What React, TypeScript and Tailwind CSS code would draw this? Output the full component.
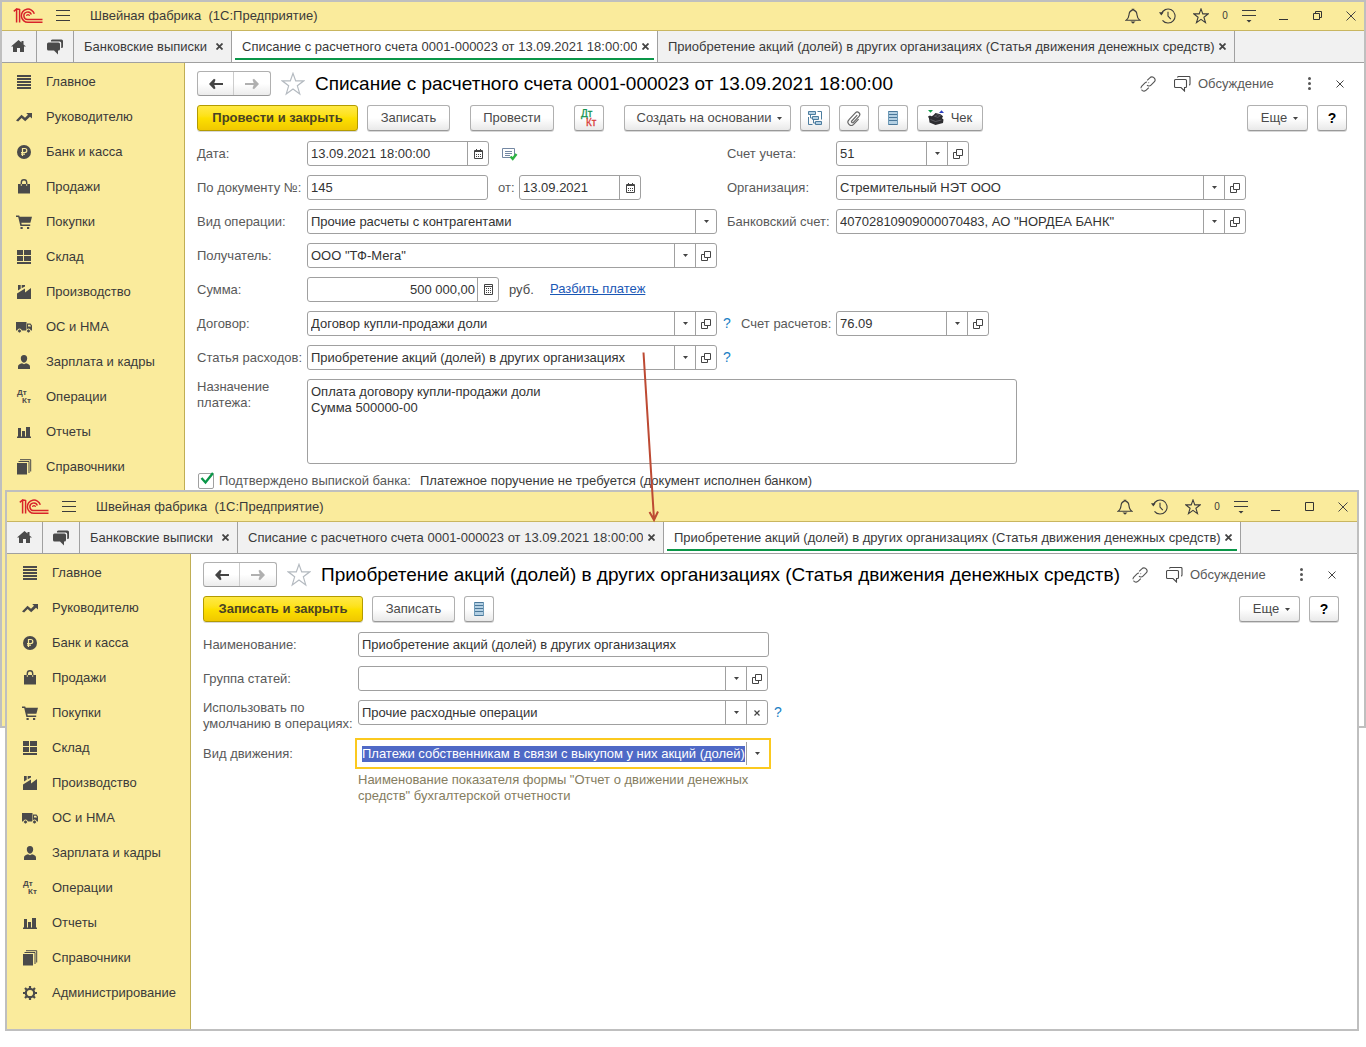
import React from 'react';

type AddonKind = 'drop' | 'open' | 'calendar' | 'calc' | 'clear';

function Logo() {
  return (
    <svg width="30" height="16" viewBox="0 0 30 16" fill="none" stroke="#d8232a" strokeWidth="1.5">
      <path d="M.8 3.4 3.6 1v13.6M6.6 1v13.6M3.6 1.2h3" />
      <path d="M21.3 5.8A6.6 6.6 0 1 0 15 14.3h14.5" />
      <path d="M18.3 6.6A3.8 3.8 0 1 0 15 11.6h14.5" />
      <path d="M13.6 8.1a1.4 1.4 0 0 1 2.8 0" strokeWidth="1.2" />
    </svg>
  );
}

function BellIcon() {
  return (
    <svg width="16" height="16" viewBox="0 0 16 16" fill="none" stroke="#3c3c3c" strokeWidth="1.1">
      <path d="M1.2 12.2h13.6c-2.3-1.6-2.6-3-2.8-5.3-.2-2.7-1.4-4.1-3.2-4.5V1.2H7.2v1.2C5.4 2.8 4.2 4.200 4 6.900c-.2 2.300-.5 3.700-2.800 5.300Z" />
      <path d="M5.500 13.500h5L8 15.800Z" fill="#3c3c3c" stroke="none" />
    </svg>
  );
}

function HistoryIcon() {
  return (
    <svg width="17" height="16" viewBox="0 0 17 16" fill="none" stroke="#3c3c3c" strokeWidth="1.1">
      <path d="M2.300 6.200A7 7 0 1 1 3.500 12.300" />
      <path d="M9 3.800V8l2.800 3.200" />
      <path d="M0 4.200h4.600L2.300 7.400Z" fill="#3c3c3c" stroke="none" />
    </svg>
  );
}

function StarIcon({ size, color }: { size: number; color: string }) {
  return (
    <svg width={size} height={size} viewBox="0 0 16 16" fill="none" stroke={color} strokeWidth={size > 16 ? 0.8 : 1.1}>
      <path d="m8 .9 1.800 5h5.400l-4.300 3.300 1.600 5.400L8 11.400l-4.500 3.200 1.600-5.400L.8 5.900h5.400Z" />
    </svg>
  );
}

function ServiceIcon() {
  return (
    <svg width="14" height="14" viewBox="0 0 14 14" fill="#3c3c3c">
      <path d="M0 1h14v1H0zM0 6h14v1H0zM4.500 11h5L7 13.500Z" />
    </svg>
  );
}

function HomeIcon() {
  return (
    <svg width="15" height="14" viewBox="0 0 15 14" fill="#4a4a4a" className="-mt-0.5">
      <path d="M7.500 1 0 7.600h2V13h4V9h3v4h4V7.600h2l-2.500-2.200V2h-2v1.600Z" />
    </svg>
  );
}

function ChatFilledIcon() {
  return (
    <svg width="17" height="16" viewBox="0 0 17 16" fill="#4a4a4a">
      <path d="M1.500 3.500h10A1.500 1.500 0 0 1 13 5v5a1.500 1.500 0 0 1-1.500 1.500H11v4l-4-4H1.500A1.500 1.500 0 0 1 0 10V5a1.500 1.500 0 0 1 1.500-1.500Z" />
      <path d="M4 2.500A1.500 1.500 0 0 1 5.500.5h9A1.500 1.500 0 0 1 16 2v5.500A1.500 1.500 0 0 1 14.200 9V4a1.500 1.500 0 0 0-1.500-1.500Z" />
    </svg>
  );
}

function ChatIcon() {
  return (
    <svg width="17" height="16" viewBox="0 0 17 16" fill="none" stroke="#4a4a4a" strokeWidth="1.100">
      <path d="M1.500 3.500h10a1 1 0 0 1 1 1v6a1 1 0 0 1-1 1h-1V15L7 11.500H1.500a1 1 0 0 1-1-1v-6a1 1 0 0 1 1-1Z" />
      <path d="M3.500 1.500a1 1 0 0 1 1-1H15a1 1 0 0 1 1 1V8a1 1 0 0 1-1 1" />
    </svg>
  );
}

function LinkIcon() {
  return (
    <svg width="16" height="16" viewBox="0 0 16 16" fill="none" stroke="#555" strokeWidth="1.100">
      <path d="m7.200 4.400 2.600-2.600a2.800 2.800 0 0 1 4.400.2 2.800 2.800 0 0 1 0 3.900L11 9.100a2.800 2.800 0 0 1-4 0" />
      <path d="m8.800 11.600-2.600 2.600a2.800 2.800 0 0 1-4.400-.2 2.800 2.800 0 0 1 0-3.900L5 6.900a2.800 2.800 0 0 1 4 0" strokeDasharray="9 1.500" />
    </svg>
  );
}

function CloseIcon({ size, width = 1 }: { size: number; width?: number }) {
  return (
    <svg width={size} height={size} viewBox={`0 0 ${size} ${size}`} stroke="#444" strokeWidth={width}>
      <path d={`M.5.5 ${size - 0.5} ${size - 0.5}M${size - 0.5} .5.5 ${size - 0.5}`} />
    </svg>
  );
}

function ArrowIcon({ color, flip = false }: { color: string; flip?: boolean }) {
  return (
    <svg width="14" height="12" viewBox="0 0 14 12" fill={color} className={flip ? 'rotate-180' : ''}>
      <path d="M0 6 5 .8l1.500.9L5.300 5H14v2H5.300l1.200 3.300-1.500.9Z" />
    </svg>
  );
}

function Caret() {
  return (
    <svg width="5" height="3" viewBox="0 0 5 3" fill="#444" aria-hidden="true">
      <path d="M0 0h5L2.500 3Z" />
    </svg>
  );
}

function ListIcon() {
  return (
    <svg width="12" height="14" viewBox="0 0 12 14">
      <path d="M1 0h10v14H1z" fill="#b4d0e3" />
      <path d="M1 0h10v1H1zM1 3h10v1H1zM1 6h10v1H1zM1 9h10v1H1zM1 13h10v1H1z" fill="#4a7799" />
      <path d="M1 0h1v14H1zM10 0h1v14h-1z" fill="#6f9bb8" />
    </svg>
  );
}

function StructureIcon() {
  return (
    <svg width="16" height="16" viewBox="0 0 16 16" fill="none" stroke="#4d7d9f">
      <path d="M1.500 1.500h7v3h-7zM5.500 6.500h6v3h-6zM8.500 11.500h6v3h-6z" fill="#b4d0e3" />
      <path d="M10.500 1.500h4v8M3.500 4.500V8h2M6.500 9.500V13h2M1.500 7v7.500h4" />
    </svg>
  );
}

function ClipIcon() {
  return (
    <svg width="14" height="15" viewBox="0 0 14 15" fill="none" stroke="#666" strokeWidth="1.200">
      <path d="M10.200 4.200 4.800 10a1 1 0 0 0 1.600 1.400L12 5.300a2.400 2.400 0 0 0-3.600-3.500L2 8.700a3.200 3.200 0 0 0 4.600 4.700l5-5.300" />
    </svg>
  );
}

function CashIcon() {
  return (
    <svg width="17" height="16" viewBox="0 0 17 16">
      <path d="M0 0h5L2.500 2.800Z" fill="#12a14b" />
      <path d="M11 3h5L13.500.2Z" fill="#2c3ec0" />
      <path d="M5 5.500 7.500 3l5 1.200 2.500 2-1 2 1.500 1.300-.5 3.500-7.500 2-6-2.500L1 8.500l-1-2 2-1 1.500.8Z" fill="#2c2c30" />
      <path d="m6.500 6.300 3-1.600 3 .9-2.600 1.700ZM2.500 9.500l5 2 6-1.500" fill="none" stroke="#77777f" strokeWidth=".6" />
    </svg>
  );
}

function PostingsIcon() {
  return (
    <svg width="18" height="18" viewBox="0 0 18 18" fontFamily="Liberation Sans, sans-serif" fontSize="10">
      <text x="1" y="8" fill="#149450" stroke="#149450" strokeWidth=".3">Дт</text>
      <text x="6" y="17" fill="#d9403c" stroke="#d9403c" strokeWidth=".3">Кт</text>
    </svg>
  );
}

function PostedIcon() {
  return (
    <svg width="16" height="14" viewBox="0 0 16 14" fill="none">
      <path d="M.5 1.500h12v9H.5zM3 4.500h7M3 6.500h7M3 8.500h5" stroke="#7488a3" />
      <path d="m8.500 9.500 2.200 2.300L14.500 7" stroke="#2fb344" strokeWidth="2.400" />
    </svg>
  );
}

function AddonIcon({ kind }: { kind: AddonKind }) {
  if (kind === 'drop') return <Caret />;
  if (kind === 'clear') return <CloseIcon size={6} width={1.2} />;
  if (kind === 'open') {
    return (
      <svg width="10" height="10" viewBox="0 0 10 10" fill="none" stroke="#444">
        <path d="M3.500.5h6v6h-6zM3.500 3.500h-3v6h6v-3" />
      </svg>
    );
  }
  if (kind === 'calc') {
    return (
      <svg width="9" height="11" viewBox="0 0 9 11" fill="none" stroke="#444">
        <path d="M.5.5h8v10h-8zM.5 2.500h8" />
        <path d="M2 4.500h5.500M2 6.500h5.500M2 8.500h5.500" strokeDasharray="1 1" />
      </svg>
    );
  }
  return (
    <svg width="9" height="10" viewBox="0 0 9 10" fill="none" stroke="#444">
      <path d="M.5 1.500h8v8h-8zM.5 2.500h8M2.500 0v2M6.500 0v2" />
      <path d="M2 5.500h5.500M2 7.500h5.500" strokeDasharray="1 1" />
    </svg>
  );
}

const MENU_ICONS: Record<string, React.ReactNode> = {
  main: <path d="M1 1h14v2H1zM1 4h14v2H1zM1 7h14v2H1zM1 10h14v2H1zM1 13h14v2H1z" />,
  trend: <path d="M0 11.500 5.500 5.800l3.500 3 3-3L10.200 4H16v5.500l-2-1.800-4.800 4.600-3.600-3.200-3.500 3.400Z" />,
  bank: (
    <>
      <circle cx="8" cy="8" r="7" />
      <path d="M6.500 12V4.500h2.300a2 2 0 0 1 0 4H5M5 10.200h4" fill="none" stroke="#faeb9c" strokeWidth="1.200" />
    </>
  ),
  bag: (
    <>
      <path d="M2 5h12v9.500H2z" />
      <path d="M5.300 7V3.500a2.700 2.700 0 0 1 5.400 0V7" fill="none" stroke="#4a4a4a" strokeWidth="1.400" />
      <path d="M5.300 5v2M10.700 5v2" stroke="#faeb9c" strokeWidth=".8" />
    </>
  ),
  cart: <path d="M0 1.500h3.200l.5 1.300H16l-1.600 6H5.300l.4 1.700h8.500v1.500H4.400L2.200 3H0zM4.500 13h2.200v2H4.500zM11 13h2.200v2H11z" />,
  stock: <path d="M1 1h6v5H1zM8 1h7v5H8zM1 7h6v5H1zM8 7h7v5H8zM1 13h14v2H1z" />,
  factory: <path d="M1 15V9.500l8-5v4L15 4v11zM2 1h2.700v3.800L2 6.500zM5.700 1H9v1.500L5.700 4.300z" />,
  truck: (
    <>
      <path d="M0 3h10.500v8.500H0zM11 4.500h3.500L16 6.500v5h-5z" />
      <path d="M12 5.700h2.200l.8 1.800h-3z" fill="#faeb9c" />
      <g stroke="#faeb9c" strokeWidth="1">
        <circle cx="3.500" cy="12" r="2" />
        <circle cx="12.500" cy="12" r="2" />
      </g>
    </>
  ),
  person: <path d="M8 1c2.200 0 3.200 1.400 3.200 3.200 0 2.300-1.400 4.500-3.200 4.500S4.800 6.500 4.800 4.200C4.800 2.400 5.800 1 8 1ZM2 15v-2.300c0-2 1.800-2.800 4-3.400l2 .9 2-.9c2.200.6 4 1.400 4 3.400V15Z" />,
  operations: (
    <g fontFamily="Liberation Sans, sans-serif" fontSize="8" fontWeight="bold">
      <text x="1" y="6">Дт</text>
      <text x="6" y="14">Кт</text>
    </g>
  ),
  reports: <path d="M1 12.500h14V14H1zM2 4h3v9H2zM6 7h3v6H6zM10 3h4v10h-4z" />,
  books: (
    <>
      <path d="M1 4h10v11.500H1z" />
      <path d="M2.500 2.500H13V14M4 .7h10.700V12.500" fill="none" stroke="#4a4a4a" strokeWidth="1" />
    </>
  ),
  gear: (
    <>
      <circle cx="8" cy="8" r="4.200" fill="none" stroke="#4a4a4a" strokeWidth="2.200" />
      <path d="M8 1v3M8 12v3M1 8h3M12 8h3M3 3l2.200 2.200M10.800 10.800 13 13M3 13l2.200-2.200M10.800 5.200 13 3" stroke="#4a4a4a" strokeWidth="2.200" />
    </>
  ),
};

const MENU = [
  { icon: 'main', title: 'Главное' },
  { icon: 'trend', title: 'Руководителю' },
  { icon: 'bank', title: 'Банк и касса' },
  { icon: 'bag', title: 'Продажи' },
  { icon: 'cart', title: 'Покупки' },
  { icon: 'stock', title: 'Склад' },
  { icon: 'factory', title: 'Производство' },
  { icon: 'truck', title: 'ОС и НМА' },
  { icon: 'person', title: 'Зарплата и кадры' },
  { icon: 'operations', title: 'Операции' },
  { icon: 'reports', title: 'Отчеты' },
  { icon: 'books', title: 'Справочники' },
];

const ADMIN_MENU = [...MENU, { icon: 'gear', title: 'Администрирование' }];

const TABS = [
  { title: 'Банковские выписки', width: 'w-[158px]' },
  { title: 'Списание с расчетного счета 0001-000023 от 13.09.2021 18:00:00', width: 'w-[426px]' },
  { title: 'Приобретение акций (долей) в других организациях (Статья движения денежных средств)', width: 'w-[577px]' },
];

function TitleBar({ maximized }: { maximized: boolean }) {
  const cell = 'flex h-full w-7 items-center justify-center';
  return (
    <header className="flex h-[30px] items-center border-b border-[#c9b660] bg-[#faeb9c]">
      <div className="ml-3">
        <Logo />
      </div>
      <button type="button" aria-label="Меню" className="ml-3 flex flex-col gap-1 px-px">
        <span className="h-px w-[14px] bg-[#3c3c3c]" />
        <span className="h-px w-[14px] bg-[#3c3c3c]" />
        <span className="h-px w-[14px] bg-[#3c3c3c]" />
      </button>
      <span className="ml-[19px] flex-1 truncate whitespace-pre">{'Швейная фабрика  (1С:Предприятие)'}</span>
      <div className="flex h-full items-center gap-1.5">
        <button type="button" aria-label="Уведомления" className={cell}><BellIcon /></button>
        <button type="button" aria-label="История" className={cell}><HistoryIcon /></button>
        <button type="button" aria-label="Избранное" className={cell}><StarIcon size={16} color="#3c3c3c" /></button>
        <span className="w-2 text-center text-[10px]">0</span>
        <button type="button" aria-label="Сервис" className={cell}><ServiceIcon /></button>
        <button type="button" aria-label="Свернуть" className={cell}>
          <span className="mt-2 h-px w-[9px] bg-[#333]" />
        </button>
        <button type="button" aria-label="Развернуть" className={cell}>
          <svg width="9" height="9" viewBox="0 0 9 9" fill="none" stroke="#333">
            {maximized ? <path d="M.5 2.500h6v6h-6zM2.500 2.500v-2h6v6h-2" /> : <path d="M.5.5h8v8h-8z" />}
          </svg>
        </button>
        <button type="button" aria-label="Закрыть" className={cell}><CloseIcon size={10} /></button>
      </div>
    </header>
  );
}

function TabBar({ active }: { active: number }) {
  return (
    <nav className="flex h-8 border-b border-[#a0a0a0] bg-[#f1f1f1]">
      <button type="button" aria-label="Начальная страница" className="flex w-9 shrink-0 items-center justify-center border-r border-[#a0a0a0]">
        <HomeIcon />
      </button>
      <button type="button" aria-label="Обсуждения" className="flex w-[37px] shrink-0 items-center justify-center border-r border-[#a0a0a0]">
        <ChatFilledIcon />
      </button>
      {TABS.map((tab, i) => (
        <div
          key={tab.title}
          className={`relative flex items-center justify-between border-r border-[#a0a0a0] pr-2 pl-2.5 ${tab.width} ${i === active ? 'bg-white' : ''}`}
        >
          <a href="#" className="truncate">{tab.title}</a>
          <button type="button" aria-label="Закрыть вкладку" className="shrink-0"><CloseIcon size={7} width={1.8} /></button>
          {i === active && <span className="absolute inset-x-[3px] bottom-0.5 h-0.5 bg-[#0a9648]" />}
        </div>
      ))}
    </nav>
  );
}

function Sidebar({ items }: { items: typeof MENU }) {
  return (
    <aside className="w-[184px] shrink-0 border-r border-[#c0ae55] bg-[#faeb9c] pt-px pb-[19px]">
      <ul>
        {items.map((item) => (
          <li key={item.title}>
            <a href="#" className="flex h-[35px] items-center gap-3.5 pl-[15px]">
              <svg width="16" height="16" viewBox="0 0 16 16" fill="#4a4a4a" className="shrink-0" aria-hidden="true">
                {MENU_ICONS[item.icon]}
              </svg>
              {item.title}
            </a>
          </li>
        ))}
      </ul>
    </aside>
  );
}

function FormHeader({ title }: { title: string }) {
  return (
    <div className="flex h-[25px] items-center">
      <div className="flex h-full shrink-0 rounded-[3px] border border-[#b0b0b0] border-b-[#999] bg-linear-to-b from-white from-50% to-[#ececec]">
        <button type="button" aria-label="Назад" className="flex w-9 items-center justify-center border-r border-[#ccc]">
          <ArrowIcon color="#444" />
        </button>
        <button type="button" aria-label="Вперед" className="flex w-9 items-center justify-center">
          <ArrowIcon color="#b0b0b0" flip />
        </button>
      </div>
      <button type="button" aria-label="В избранное" className="ml-2.5 shrink-0"><StarIcon size={24} color="#b4bac0" /></button>
      <h1 className="ml-2.5 flex-1 truncate text-[19px] leading-6 text-black">{title}</h1>
      <div className="-mr-px flex shrink-0 items-center">
        <button type="button" aria-label="Ссылка"><LinkIcon /></button>
        <button type="button" className="ml-[18px] flex w-[101px] items-center gap-[7px] text-[#595959]">
          <ChatIcon />
          Обсуждение
        </button>
        <button type="button" aria-label="Еще действия" className="ml-[33px] flex flex-col gap-0.5">
          <span className="size-[3px] rounded-full bg-[#555]" />
          <span className="size-[3px] rounded-full bg-[#555]" />
          <span className="size-[3px] rounded-full bg-[#555]" />
        </button>
        <button type="button" aria-label="Закрыть" className="ml-[25px] w-3"><CloseIcon size={8} /></button>
      </div>
    </div>
  );
}

interface ToolButtonProps {
  width: string;
  primary?: boolean;
  label?: string;
  children: React.ReactNode;
}

function ToolButton({ width, primary = false, label, children }: ToolButtonProps) {
  const look = primary
    ? 'border-[#b39b00] bg-linear-to-b from-[#ffe942] via-[#fde000] to-[#f0c800] font-bold text-[#4a4225]'
    : 'border-[#b0b0b0] border-b-[#999] bg-linear-to-b from-white from-50% to-[#e9e9e9] text-[#4a4a4a]';
  return (
    <button
      type="button"
      aria-label={label}
      className={`flex h-[26px] shrink-0 items-center justify-center gap-1.5 rounded-[3px] border whitespace-nowrap shadow-[0_1px_0_#d8d8d8] ${width} ${look}`}
    >
      {children}
    </button>
  );
}

function MoreButtons() {
  return (
    <div className="ml-auto flex gap-[9px]">
      <ToolButton width="w-[61px]"><span className="pl-1">Еще</span><Caret /></ToolButton>
      <ToolButton width="w-[30px]"><b className="text-sm text-black">?</b></ToolButton>
    </div>
  );
}

const ADDON_TITLES: Record<AddonKind, string> = {
  drop: 'Выбрать из списка',
  open: 'Открыть',
  calendar: 'Выбрать дату',
  calc: 'Калькулятор',
  clear: 'Очистить',
};

interface FieldProps {
  id: string;
  value: string;
  width: string;
  addons?: AddonKind[];
  right?: boolean;
}

function Field({ id, value, width, addons = [], right = false }: FieldProps) {
  return (
    <div className={`flex h-[25px] min-w-0 rounded-[3px] border border-[#a0a0a0] bg-white ${width}`}>
      <input
        id={id}
        type="text"
        defaultValue={value}
        className={`min-w-0 flex-1 bg-transparent text-[#333] outline-none ${right ? 'pr-0.5 text-right' : 'px-[3px]'}`}
      />
      {addons.map((kind) => (
        <button
          key={kind}
          type="button"
          aria-label={ADDON_TITLES[kind]}
          className="flex w-[21px] shrink-0 items-center justify-center border-l border-[#a0a0a0]"
        >
          <AddonIcon kind={kind} />
        </button>
      ))}
    </div>
  );
}

function Label({ id, width, children }: { id: string; width: string; children: React.ReactNode }) {
  return (
    <label htmlFor={id} className={`shrink-0 leading-[25px] whitespace-nowrap text-[#595959] ${width}`}>
      {children}
    </label>
  );
}

function Hint() {
  return <a href="#" className="ml-1.5 text-sm leading-[25px] text-[#1b7fc4]">?</a>;
}

function WriteOffForm() {
  return (
    <main className="min-w-0 flex-1 pt-2 pr-[18px] pl-3">
      <FormHeader title="Списание с расчетного счета 0001-000023 от 13.09.2021 18:00:00" />
      <div className="mt-[9px] flex gap-[9px]">
        <ToolButton width="w-[161px]" primary>Провести и закрыть</ToolButton>
        <ToolButton width="w-[83px]">Записать</ToolButton>
        <div className="mx-[11px] flex gap-5">
          <ToolButton width="w-[84px]">Провести</ToolButton>
          <ToolButton width="w-[30px]" label="Проводки"><PostingsIcon /></ToolButton>
        </div>
        <ToolButton width="w-[167px]"><span className="pl-1">Создать на основании</span><Caret /></ToolButton>
        <ToolButton width="w-[30px]" label="Структура подчиненности"><StructureIcon /></ToolButton>
        <ToolButton width="w-[30px]" label="Файлы"><ClipIcon /></ToolButton>
        <ToolButton width="w-[30px]" label="Список"><ListIcon /></ToolButton>
        <ToolButton width="w-[66px]"><CashIcon />Чек</ToolButton>
        <MoreButtons />
      </div>

      <div className="mt-2.5 flex flex-col gap-[9px]">
        <div className="flex">
          <div className="flex w-[530px] shrink-0 items-center">
            <Label id="date" width="w-[110px]">Дата:</Label>
            <Field id="date" value="13.09.2021 18:00:00" width="w-[182px]" addons={['calendar']} />
            <span className="ml-[13px]"><PostedIcon /></span>
          </div>
          <Label id="account" width="w-[109px]">Счет учета:</Label>
          <Field id="account" value="51" width="w-[133px]" addons={['drop', 'open']} />
        </div>

        <div className="flex">
          <div className="flex w-[530px] shrink-0">
            <Label id="doc-number" width="w-[110px]">По документу №:</Label>
            <Field id="doc-number" value="145" width="w-[181px]" />
            <span className="w-2.5" />
            <Label id="doc-date" width="w-[21px]">от:</Label>
            <Field id="doc-date" value="13.09.2021" width="w-[122px]" addons={['calendar']} />
          </div>
          <Label id="company" width="w-[109px]">Организация:</Label>
          <Field id="company" value="Стремительный НЭТ ООО" width="w-[410px]" addons={['drop', 'open']} />
        </div>

        <div className="flex">
          <div className="flex w-[530px] shrink-0">
            <Label id="operation" width="w-[110px]">Вид операции:</Label>
            <div className="flex h-[25px] w-[410px] rounded-[3px] border border-[#a0a0a0] bg-white">
              <select id="operation" className="min-w-0 flex-1 appearance-none px-[3px] text-[#333] outline-none">
                <option>Прочие расчеты с контрагентами</option>
              </select>
              <span className="flex w-[21px] items-center justify-center border-l border-[#a0a0a0]"><Caret /></span>
            </div>
          </div>
          <Label id="bank-account" width="w-[109px]">Банковский счет:</Label>
          <Field id="bank-account" value={'40702810909000070483, АО "НОРДЕА БАНК"'} width="w-[410px]" addons={['drop', 'open']} />
        </div>

        <div className="flex">
          <Label id="receiver" width="w-[110px]">Получатель:</Label>
          <Field id="receiver" value={'ООО "ТФ-Мега"'} width="w-[410px]" addons={['drop', 'open']} />
        </div>

        <div className="flex">
          <Label id="amount" width="w-[110px]">Сумма:</Label>
          <Field id="amount" value="500 000,00" width="w-[192px]" addons={['calc']} right />
          <span className="ml-2.5 w-[41px] leading-[25px] text-[#4a4a4a]">руб.</span>
          <a href="#" className="leading-6 text-[#1a57b5] underline">Разбить платеж</a>
        </div>

        <div className="flex">
          <div className="flex w-[544px] shrink-0">
            <Label id="contract" width="w-[110px]">Договор:</Label>
            <Field id="contract" value="Договор купли-продажи доли" width="w-[410px]" addons={['drop', 'open']} />
            <Hint />
          </div>
          <Label id="settlement" width="w-[95px]">Счет расчетов:</Label>
          <Field id="settlement" value="76.09" width="w-[153px]" addons={['drop', 'open']} />
        </div>

        <div className="flex">
          <Label id="expense" width="w-[110px]">Статья расходов:</Label>
          <Field id="expense" value="Приобретение акций (долей) в других организациях" width="w-[410px]" addons={['drop', 'open']} />
          <Hint />
        </div>

        <div className="flex">
          <label htmlFor="purpose" className="w-[110px] shrink-0 pr-6 leading-4 text-[#595959]">Назначение платежа:</label>
          <textarea
            id="purpose"
            defaultValue={'Оплата договору купли-продажи доли\nСумма 500000-00'}
            className="h-[85px] w-[710px] resize-none rounded-[3px] border border-[#a0a0a0] px-[3px] py-1 leading-4 text-[#333] outline-none"
          />
        </div>

        <div className="flex h-4 items-center">
          <span className="relative ml-px size-4">
            <input id="confirmed" type="checkbox" defaultChecked className="block size-4 appearance-none rounded-[2px] border border-[#a0a0a0] bg-white" />
            <svg width="15" height="13" viewBox="0 0 15 13" fill="none" stroke="#0a9648" strokeWidth="2.400" className="pointer-events-none absolute -top-px left-0.5">
              <path d="m1.500 6 4 4.500L13 1" />
            </svg>
          </span>
          <label htmlFor="confirmed" className="ml-[5px] w-[201px] whitespace-nowrap text-[#595959]">Подтверждено выпиской банка:</label>
          <span>Платежное поручение не требуется (документ исполнен банком)</span>
        </div>
      </div>
    </main>
  );
}

function CashFlowItemForm() {
  return (
    <main className="min-w-0 flex-1 pt-2 pr-[18px] pl-3">
      <FormHeader title="Приобретение акций (долей) в других организациях (Статья движения денежных средств)" />
      <div className="mt-[9px] flex gap-[9px]">
        <ToolButton width="w-[160px]" primary>Записать и закрыть</ToolButton>
        <ToolButton width="w-[83px]">Записать</ToolButton>
        <ToolButton width="w-[30px]" label="Список"><ListIcon /></ToolButton>
        <MoreButtons />
      </div>

      <div className="mt-2.5 flex flex-col gap-[9px]">
        <div className="flex">
          <Label id="name" width="w-[155px]">Наименование:</Label>
          <Field id="name" value="Приобретение акций (долей) в других организациях" width="w-[411px]" />
        </div>
        <div className="flex">
          <Label id="group" width="w-[155px]">Группа статей:</Label>
          <Field id="group" value="" width="w-[410px]" addons={['drop', 'open']} />
        </div>
        <div className="flex">
          <label htmlFor="usage" className="w-[155px] shrink-0 leading-4 text-[#595959]">
            Использовать по<br />умолчанию в операциях:
          </label>
          <Field id="usage" value="Прочие расходные операции" width="w-[410px]" addons={['drop', 'clear']} />
          <Hint />
        </div>
        <div className="flex">
          <Label id="movement" width="w-[155px]">Вид движения:</Label>
          <div className="flex h-[25px] w-[410px] items-center bg-white outline-2 outline-offset-1 outline-[#fbc91f]">
            <select id="movement" className="ml-1 h-4 w-[383px] appearance-none overflow-hidden bg-[#4f69c6] text-white outline-none">
              <option>Платежи собственникам в связи с выкупом у них акций (долей)</option>
            </select>
            <span className="ml-px flex h-[23px] flex-1 items-center justify-center border-l border-[#a0a0a0]"><Caret /></span>
          </div>
        </div>
      </div>
      <p className="mt-1.5 ml-[155px] w-[410px] leading-4 text-[#857d60]">
        Наименование показателя формы "Отчет о движении денежных средств" бухгалтерской отчетности
      </p>
    </main>
  );
}

export default function App() {
  return (
    <div className="relative min-h-screen overflow-hidden bg-white font-['Liberation_Sans',Arial,sans-serif] text-[13px] leading-4 text-[#3a3a3a]">
      {/* Окно документа */}
      <section className="absolute inset-x-0 top-0 flex min-h-[728px] flex-col overflow-hidden border-2 border-[#bfbfbf] bg-white">
        <div className="-mx-px -mt-px flex flex-1 flex-col">
          <TitleBar maximized />
          <TabBar active={1} />
          <div className="flex flex-1">
            <Sidebar items={MENU} />
            <WriteOffForm />
          </div>
        </div>
      </section>

      {/* Окно статьи движения денежных средств */}
      <section className="relative mt-[490px] mr-[7px] ml-[5px] overflow-hidden border-2 border-[#bfbfbf] bg-white">
        <TitleBar maximized={false} />
        <TabBar active={2} />
        <div className="flex">
          <Sidebar items={ADMIN_MENU} />
          <CashFlowItemForm />
        </div>
      </section>

      <svg width="20" height="172" viewBox="0 0 20 172" fill="none" stroke="#bd4a33" strokeWidth="2" className="pointer-events-none absolute top-[351px] left-[640px]">
        <path d="M3.500 1.500 14 168M9.500 161l4.500 8 4-8.500" />
      </svg>
    </div>
  );
}
